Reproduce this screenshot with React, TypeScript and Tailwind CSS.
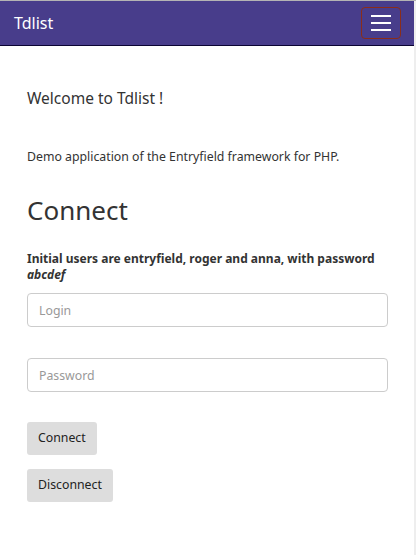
import React from "react";

function Toggler() {
  return (
    <button className="flex h-[32px] w-[40px] flex-col items-center justify-center gap-[5px] rounded-[4px] border border-[#8a2d1a]">
      <span className="block h-[2px] w-[20px] bg-white" />
      <span className="block h-[2px] w-[20px] bg-white" />
      <span className="block h-[2px] w-[20px] bg-white" />
    </button>
  );
}

export default function App() {
  return (
    <div
      className="flex min-h-[555px] w-[416px] flex-col bg-white text-[#333]"
      style={{ fontFamily: '"Noto Sans", "Open Sans", sans-serif' }}
    >
      <div className="h-[1px] bg-[#b4b4b4]" />
      <div className="flex flex-1">
        <div className="flex flex-1 flex-col">
          <nav className="flex h-[45px] items-center justify-between border-b border-[#0b0433] bg-[#483d8b] pl-[14px] pr-[13px]">
            <span className="text-[16px] leading-none text-white">Tdlist</span>
            <Toggler />
          </nav>

          <main className="flex flex-col pl-[27px] pr-[26px]">
            <p className="mt-[42px] text-[15.5px] leading-[20px]">Welcome to Tdlist !</p>
            <p className="mt-[40px] text-[12.3px] leading-[18px]">
              Demo application of the Entryfield framework for PHP.
            </p>
            <h1 className="mt-[27px] text-[26px] leading-[34px]">Connect</h1>
            <p className="mt-[24px] text-[12px] font-bold leading-[16px]">
              <span className="whitespace-nowrap">Initial users are entryfield, roger and anna, with password</span>
              <br />
              <em>abcdef</em>
            </p>
            <input
              className="mt-[10px] h-[34px] w-full rounded-[4px] border border-[#ccc] px-[11px] text-[12.3px] outline-none placeholder:text-[#999]"
              placeholder="Login"
            />
            <input
              className="mt-[31px] h-[34px] w-full rounded-[4px] border border-[#ccc] px-[11px] text-[12.3px] outline-none placeholder:text-[#999]"
              placeholder="Password"
              type="password"
            />
            <div className="mt-[30px] flex flex-col items-start gap-[14px]">
              <button className="h-[33px] rounded-[3px] bg-[#dddddd] px-[11px] text-[12.3px] text-[#222]">
                Connect
              </button>
              <button className="h-[33px] rounded-[3px] bg-[#dddddd] px-[11px] text-[12.3px] text-[#222]">
                Disconnect
              </button>
            </div>
          </main>
        </div>
        <div className="w-[2px] bg-[#eeeeee]" />
      </div>
    </div>
  );
}
